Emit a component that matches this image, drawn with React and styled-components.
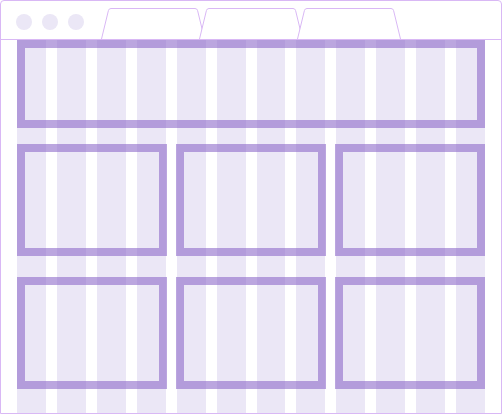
import React from 'react';
import styled, { createGlobalStyle } from 'styled-components';

const GlobalStyle = createGlobalStyle`
  html, body {
    margin: 0;
    padding: 0;
    background: #ffffff;
    font-family: "Liberation Sans", Arial, sans-serif;
  }
`;

const lavender = '#d9b8f5';
const column = '#ebe7f6';
const frameLine = 'rgba(142, 107, 202, 0.6)';

const Window = styled.div`
  width: 502px;
  height: 414px;
  box-sizing: border-box;
  border: 1px solid ${lavender};
  border-radius: 4px 4px 0 0;
  display: flex;
  flex-direction: column;
  overflow: hidden;
  background: #fff;
`;

const TitleBar = styled.div`
  height: 38px;
  border-bottom: 1px solid ${lavender};
  display: flex;
  align-items: flex-start;
  padding-left: 15px;
  flex-shrink: 0;
`;

const Dots = styled.div`
  display: flex;
  gap: 10px;
  padding-top: 13px;
`;

const Dot = styled.span`
  width: 16px;
  height: 16px;
  border-radius: 50%;
  background: ${column};
`;

const Tabs = styled.div`
  display: flex;
  align-self: flex-end;
  margin-left: 17px;
`;

const TabShape = styled.svg`
  display: block;
  width: 104px;
  height: 31px;
  & + & {
    margin-left: -6px;
  }
`;

const Tab = () => (
  <TabShape viewBox="0 0 104 31">
    <path
      d="M0.5 31 L7.4 2.6 Q7.9 0.5 10 0.5 L94 0.5 Q96.1 0.5 96.6 2.6 L103.5 31"
      fill="#fff"
      stroke={lavender}
      strokeWidth="1"
    />
  </TabShape>
);

const Canvas = styled.div`
  flex: 1;
  margin: 0 16px;
  display: flex;
  flex-direction: column;
  background-image: repeating-linear-gradient(
    to right,
    ${column} 0,
    ${column} 28.92px,
    transparent 28.92px,
    transparent 39.92px
  );
`;

const Row = styled.div`
  display: grid;
  grid-template-columns: repeat(${(p) => p.$cols}, 1fr);
  gap: 9px;
  margin-top: ${(p) => p.$offset}px;
  height: ${(p) => p.$height}px;
`;

const Block = styled.div`
  box-sizing: border-box;
  border: 8px solid ${frameLine};
`;

export default function App() {
  return (
    <>
      <GlobalStyle />
      <Window>
        <TitleBar>
          <Dots>
            <Dot />
            <Dot />
            <Dot />
          </Dots>
          <Tabs>
            <Tab />
            <Tab />
            <Tab />
          </Tabs>
        </TitleBar>
        <Canvas>
          <Row $cols={1} $offset={0} $height={88}>
            <Block />
          </Row>
          <Row $cols={3} $offset={16} $height={112}>
            <Block />
            <Block />
            <Block />
          </Row>
          <Row $cols={3} $offset={21} $height={112}>
            <Block />
            <Block />
            <Block />
          </Row>
        </Canvas>
      </Window>
    </>
  );
}
